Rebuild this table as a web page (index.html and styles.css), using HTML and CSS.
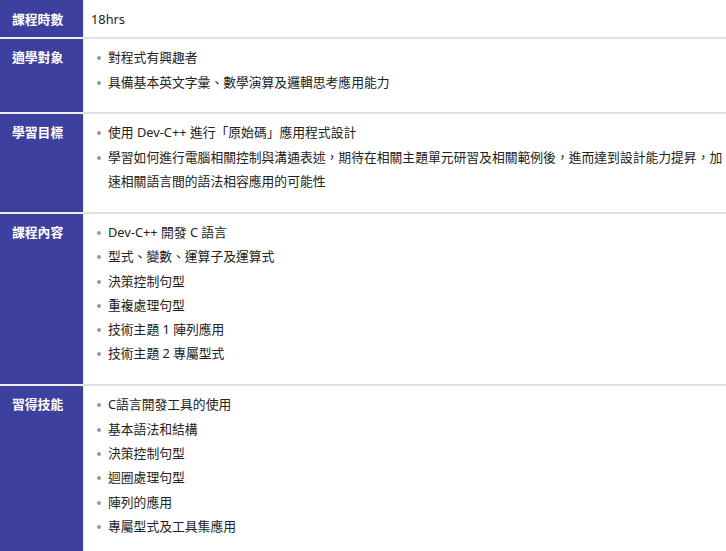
FILE: index.html
```html
<!DOCTYPE html>
<html lang="zh-Hant">
<head>
    <meta charset="UTF-8">
    <meta name="viewport" content="width=device-width, initial-scale=1.0">
    <title>課程資訊</title>
    <link rel="stylesheet" href="styles.css">
</head>
<body>
    <div class="course-info">
        <div class="info-row">
            <div class="info-label">課程時數</div>
            <div class="info-value single">18hrs</div>
        </div>
        <div class="info-row">
            <div class="info-label">適學對象</div>
            <div class="info-value">
                <ul>
                    <li>對程式有興趣者</li>
                    <li>具備基本英文字彙、數學演算及邏輯思考應用能力</li>
                </ul>
            </div>
        </div>
        <div class="info-row">
            <div class="info-label">學習目標</div>
            <div class="info-value">
                <ul>
                    <li>使用 Dev-C++ 進行「原始碼」應用程式設計</li>
                    <li>學習如何進行電腦相關控制與溝通表述，期待在相關主題單元研習及相關範例後，進而達到設計能力提昇，加速相關語言間的語法相容應用的可能性</li>
                </ul>
            </div>
        </div>
        <div class="info-row">
            <div class="info-label">課程內容</div>
            <div class="info-value">
                <ul>
                    <li>Dev-C++ 開發 C 語言</li>
                    <li>型式、變數、運算子及運算式</li>
                    <li>決策控制句型</li>
                    <li>重複處理句型</li>
                    <li>技術主題 1 陣列應用</li>
                    <li>技術主題 2 專屬型式</li>
                </ul>
            </div>
        </div>
        <div class="info-row">
            <div class="info-label">習得技能</div>
            <div class="info-value">
                <ul>
                    <li>C語言開發工具的使用</li>
                    <li>基本語法和結構</li>
                    <li>決策控制句型</li>
                    <li>迴圈處理句型</li>
                    <li>陣列的應用</li>
                    <li>專屬型式及工具集應用</li>
                </ul>
            </div>
        </div>
    </div>
</body>
</html>
```

FILE: styles.css
```css
body {
    margin: 0;
    font-family: "Noto Sans", "Noto Sans CJK TC", sans-serif;
    font-size: 12.8px;
    line-height: 1.9;
    color: #222;
    background: white;
}
.course-info {
    width: 726px;
}
.info-row {
    display: flex;
}
.info-label {
    flex: 0 0 71px;
    width: 71px;
    padding: 6px 0 6px 12px;
    background: #3d409e;
    color: white;
    font-weight: bold;
    border-bottom: 2px solid #eeeef4;
}
.info-value {
    flex: 1;
    padding: 6px 2px 6px 7px;
    border-bottom: 2px solid #e2e2e2;
    border-left: 1px solid #e8e8ee;
}
.info-value.single,
.info-row:first-child .info-label {
    padding-top: 7px;
    padding-bottom: 6px;
}
ul {
    list-style: none;
    margin: 0 0 12.5px;
    padding: 0 0 0 17px;
}
li {
    position: relative;
}
li::before {
    content: "";
    position: absolute;
    left: -11px;
    top: 11px;
    width: 4px;
    height: 4px;
    border-radius: 50%;
    background: #9a9a9a;
}
```
